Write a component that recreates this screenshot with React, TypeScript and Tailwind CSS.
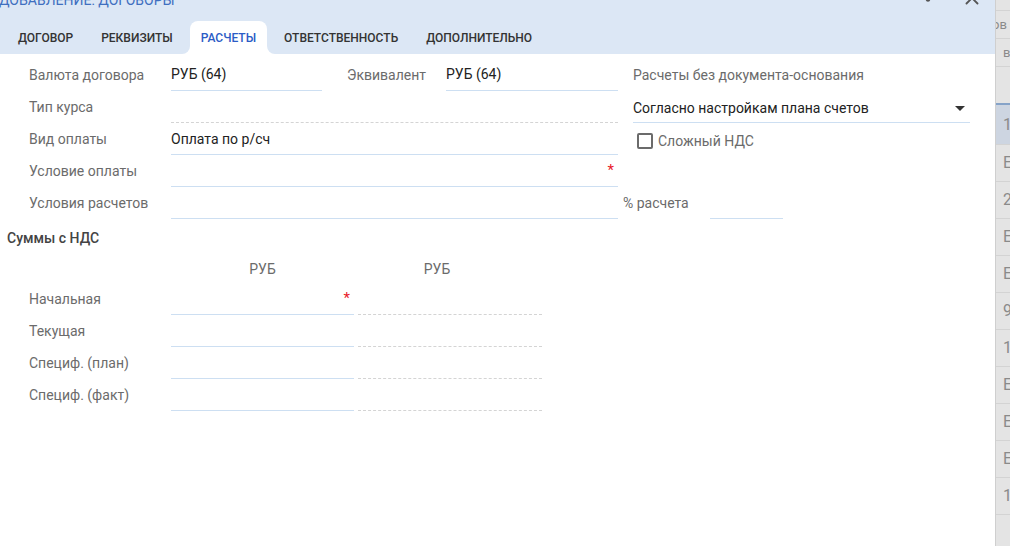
import { X, EllipsisVertical } from 'lucide-react';

const font = { fontFamily: 'Roboto, "Noto Sans", sans-serif' };

const tabs = ['ДОГОВОР', 'РЕКВИЗИТЫ', 'РАСЧЕТЫ', 'ОТВЕТСТВЕННОСТЬ', 'ДОПОЛНИТЕЛЬНО'];

const stripRows = ['Е', '2', 'Е', 'Е', '9', '1', 'Е', 'Е', 'Е', '1'];

const Req = () => <span className="ml-auto pr-[4px] text-[15px] leading-none text-[#e8202a]">*</span>;

const Label = ({ children, w = 'w-[142px]' }: { children: string; w?: string }) => (
    <div className={`${w} shrink-0 text-[14px] text-[#6b6b6b]`}>{children}</div>
);

const sumRows = ['Начальная', 'Текущая', 'Специф. (план)', 'Специф. (факт)'];

const App = () => {
    return (
        <div className="flex h-[546px] w-[1010px] overflow-hidden bg-white" style={font}>
            {/* Диалог */}
            <div className="flex w-[995px] shrink-0 flex-col bg-white">
                <div className="h-[54px] shrink-0 bg-[#dce7f5]">
                    <div className="flow-root h-[21px]">
                        <div className="-mt-[10px] flex h-[20px] items-center">
                            <div className="-ml-[1px] text-[14px] uppercase text-[#3f6fc0]">Добавление: Договоры</div>
                            <EllipsisVertical className="ml-auto mt-[-14px] h-[22px] w-[22px] text-[#555]" strokeWidth={3} />
                            <X className="ml-[22px] mr-[12px] mt-[-4px] h-[22px] w-[22px] text-[#555]" strokeWidth={2} />
                        </div>
                    </div>
                    <div className="flex h-[33px] items-stretch gap-[6px] pl-[7px]">
                        {tabs.map((t) =>
                            t === 'РАСЧЕТЫ' ? (
                                <div key={t} className="relative flex items-center rounded-t-[8px] bg-white px-[11px] text-[12px] font-medium text-[#2b5cc6]">
                                    <span className="absolute bottom-0 -left-[8px] h-[8px] w-[8px] bg-white" />
                                    <span className="absolute bottom-0 -left-[8px] h-[8px] w-[8px] rounded-br-[8px] bg-[#dce7f5]" />
                                    <span className="absolute bottom-0 -right-[8px] h-[8px] w-[8px] bg-white" />
                                    <span className="absolute bottom-0 -right-[8px] h-[8px] w-[8px] rounded-bl-[8px] bg-[#dce7f5]" />
                                    {t}
                                </div>
                            ) : (
                                <div key={t} className="flex items-center px-[11px] text-[12px] font-medium text-[#333]">
                                    {t}
                                </div>
                            )
                        )}
                    </div>
                </div>

                <div className="pt-[5px]">
                    {/* Строка 1 */}
                    <div className="flex h-[32px] items-center pl-[29px]">
                        <Label>Валюта договора</Label>
                        <div className="flex h-[32px] w-[151px] items-center border-b border-[#cddff2] text-[14px] text-[#222]">РУБ (64)</div>
                        <div className="ml-[25px] w-[99px] text-[14px] text-[#6b6b6b]">Эквивалент</div>
                        <div className="flex h-[32px] w-[172px] items-center border-b border-[#cddff2] text-[14px] text-[#222]">РУБ (64)</div>
                        <div className="ml-[15px] text-[14px] text-[#6b6b6b]">Расчеты без документа-основания</div>
                    </div>
                    {/* Строка 2 */}
                    <div className="flex h-[32px] items-center pl-[29px]">
                        <Label>Тип курса</Label>
                        <div className="h-[32px] w-[447px] border-b border-dashed border-[#d4d4d4]" />
                        <div className="ml-[15px] flex h-[32px] w-[337px] items-center border-b border-[#cddff2] pt-[3px] text-[14px] text-[#222]">
                            Согласно настройкам плана счетов
                            <span className="ml-auto mr-[5px] h-0 w-0 border-x-[5px] border-t-[5px] border-x-transparent border-t-[#333]" />
                        </div>
                    </div>
                    {/* Строка 3 */}
                    <div className="flex h-[32px] items-center pl-[29px]">
                        <Label>Вид оплаты</Label>
                        <div className="flex h-[32px] w-[447px] items-center border-b border-[#cddff2] pt-[1px] text-[14px] text-[#222]">Оплата по р/сч</div>
                        <div className="ml-[19px] mt-[4px] flex items-center gap-[5px]">
                            <span className="h-[16px] w-[16px] rounded-[2px] border-2 border-[#6b6b6b]" />
                            <span className="text-[14px] text-[#6b6b6b]">Сложный НДС</span>
                        </div>
                    </div>
                    {/* Строка 4 */}
                    <div className="flex h-[32px] items-center pl-[29px]">
                        <Label>Условие оплаты</Label>
                        <div className="flex h-[32px] w-[447px] items-center border-b border-[#cddff2]">
                            <Req />
                        </div>
                    </div>
                    {/* Строка 5 */}
                    <div className="flex h-[32px] items-center pl-[29px]">
                        <Label>Условия расчетов</Label>
                        <div className="h-[32px] w-[447px] border-b border-[#cddff2]" />
                        <div className="ml-[5px] w-[87px] text-[14px] text-[#6b6b6b]">% расчета</div>
                        <div className="h-[32px] w-[73px] border-b border-[#cddff2]" />
                    </div>

                    {/* Суммы */}
                    <div className="mt-[8px] h-[22px] pl-[7px] text-[14px] font-medium leading-[22px] text-[#444]">Суммы с НДС</div>
                    <div className="mt-[6px] flex h-[28px] items-center pl-[171px] text-[14px] text-[#6b6b6b]">
                        <div className="w-[183px] text-center">РУБ</div>
                        <div className="ml-[4px] w-[158px] text-center">РУБ</div>
                    </div>
                    {sumRows.map((r, i) => (
                        <div key={r} className="flex h-[32px] items-center pl-[29px]">
                            <Label>{r}</Label>
                            <div className="flex h-[32px] w-[183px] items-center border-b border-[#cddff2]">{i === 0 && <Req />}</div>
                            <div className="ml-[4px] h-[32px] w-[184px] border-b border-dashed border-[#d4d4d4]" />
                        </div>
                    ))}
                </div>
            </div>

            {/* Фон за диалогом */}
            <div className="flex w-[15px] shrink-0 flex-col overflow-hidden border-l border-[#cfcfcf] bg-[#e4e4e4] text-[13px] text-[#8a8a8a]">
                <div className="h-[11px] shrink-0 border-b border-[#d3d3d3]" />
                <div className="flex h-[28px] shrink-0 items-center border-b border-[#d3d3d3] pl-0">
                    <span className="-ml-[4px] whitespace-nowrap">ов</span>
                </div>
                <div className="flex h-[28px] shrink-0 items-center border-b border-[#d3d3d3] pl-[7px]">в</div>
                <div className="h-[38px] shrink-0 border-b-2 border-[#86a3c8]" />
                <div className="flex h-[40px] shrink-0 items-center border-b border-[#d3d3d3] bg-[#cdd5e1] pl-[7px] text-[16px]">1</div>
                {stripRows.map((c, i) => (
                    <div key={i} className="flex h-[37px] shrink-0 items-center border-b border-[#d3d3d3] pl-[7px] text-[16px]">
                        {c}
                    </div>
                ))}
            </div>
        </div>
    );
};

export default App;
